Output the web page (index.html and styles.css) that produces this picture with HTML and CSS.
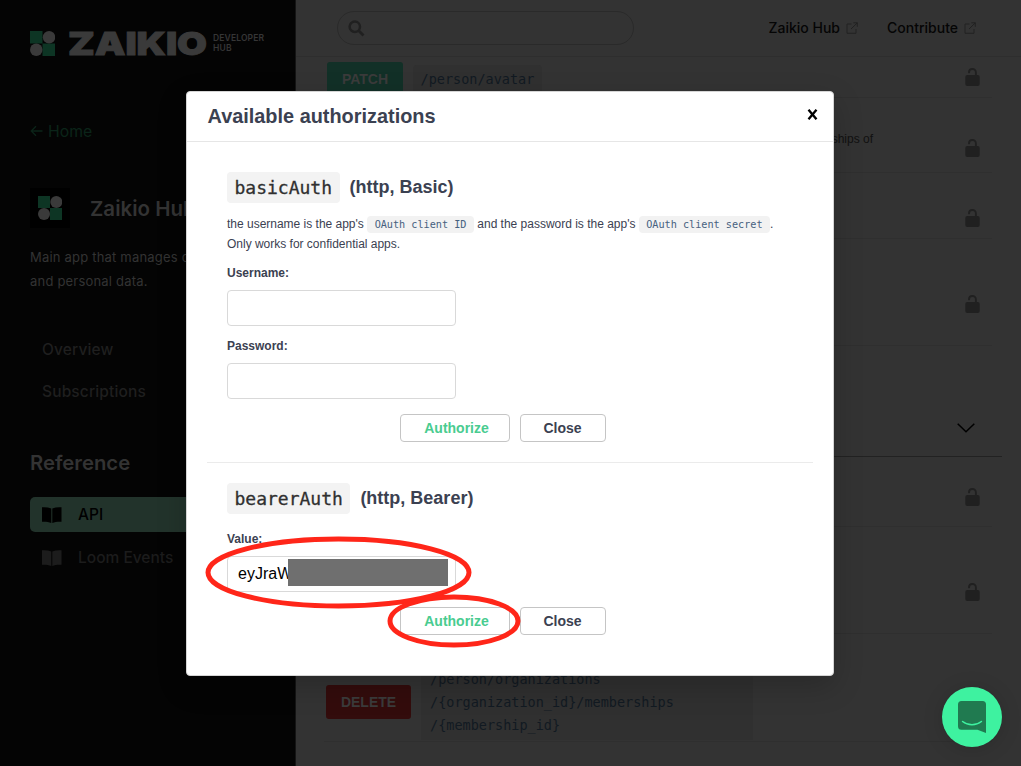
FILE: index.html
```html
<!DOCTYPE html>
<html lang="en">
<head>
<meta charset="utf-8">
<title>Zaikio Developer Hub</title>
<link rel="stylesheet" href="styles.css">
</head>
<body>
<svg class="defs" width="0" height="0">
  <symbol id="lock" viewBox="0 0 15 18"><path d="M4 4.400C4 2.300 5.400 1 7.400 1s3.500 1.400 3.500 3.400V8" fill="none" stroke="currentColor" stroke-width="1.900" stroke-linecap="round"/><rect x=".3" y="7" width="14.400" height="11" rx="2" fill="currentColor"/></symbol>
  <symbol id="external" viewBox="0 0 12 12"><path d="M5.500 2H1v9.300h9V7M7.300.8h4v4M11.200.9 5 7" fill="none" stroke="currentColor" stroke-width="1"/></symbol>
  <symbol id="book" viewBox="0 0 20 16"><path d="M0 .3C3.500 0 6.500.4 9.300 1.400V16C6.500 15 3.500 14.500 0 14.800ZM10.300 1.400C13 .4 16 0 19.500.3V14.800C16 14.500 13 15 10.300 16Z" fill="currentColor"/></symbol>
  <symbol id="mark" viewBox="0 0 24 24"><path class="mark-green" d="M0 0h12v12H0zM12 12h12v12H12z"/><circle class="mark-gray" cx="18.300" cy="6" r="6"/><circle class="mark-gray" cx="6" cy="18" r="6"/></symbol>
</svg>
<div class="app">
  <aside class="sidebar">
    <div class="logo">
      <svg class="logo-mark"><use href="#mark"/></svg>
      <svg class="wordmark" width="142" height="42"><text x="1" y="33" textLength="139" lengthAdjust="spacingAndGlyphs">ZAIKIO</text></svg>
      <span class="logo-sub">DEVELOPER<br>HUB</span>
    </div>
    <a class="home"><svg width="13" height="12" viewBox="0 0 13 12"><path d="M12.500 6H1.500M6 1.300 1.300 6 6 10.700" fill="none" stroke="currentColor" stroke-width="1.300"/></svg>Home</a>
    <div class="product"><span class="product-icon"><svg width="24" height="24"><use href="#mark"/></svg></span><h1>Zaikio Hub</h1></div>
    <p class="about">Main app that manages org<br>and personal data.</p>
    <nav class="links"><a>Overview</a><a>Subscriptions</a></nav>
    <h2>Reference</h2>
    <nav class="refs">
      <a class="ref active"><svg><use href="#book"/></svg>API</a>
      <a class="ref"><svg><use href="#book"/></svg>Loom Events</a>
    </nav>
  </aside>
  <main class="main">
    <header class="topbar">
      <div class="search"><svg width="17" height="17" viewBox="0 0 17 17"><circle cx="6.800" cy="6.800" r="5.200" fill="none" stroke="currentColor" stroke-width="2.500"/><path d="m10.500 10.500 5 5" stroke="currentColor" stroke-width="2.800"/></svg></div>
      <a class="toplink">Zaikio Hub<svg><use href="#external"/></svg></a>
      <a class="toplink">Contribute<svg><use href="#external"/></svg></a>
    </header>
    <section class="list">
      <div class="row r1"><span class="verb patch">PATCH</span><code class="path">/person/avatar</code><svg class="lock"><use href="#lock"/></svg></div>
      <div class="row r2"><span class="summary">memberships of</span><svg class="lock"><use href="#lock"/></svg></div>
      <div class="row r3"><svg class="lock"><use href="#lock"/></svg></div>
      <div class="row r4"><svg class="lock"><use href="#lock"/></svg></div>
      <div class="row group"><svg width="18" height="10" viewBox="0 0 18 10"><path d="m.7.700 8.300 8.100L17.300.7" fill="none" stroke="currentColor" stroke-width="1.500"/></svg></div>
      <div class="row r5"><svg class="lock"><use href="#lock"/></svg></div>
      <div class="row r6"><svg class="lock"><use href="#lock"/></svg></div>
      <div class="row r7"><span class="verb delete">DELETE</span><code class="path long">/person/organizations<br>/{organization_id}/memberships<br>/{membership_id}</code></div>
    </section>
  </main>
  <div class="modal">
    <div class="modal-head"><h3>Available authorizations</h3><svg width="11" height="11" viewBox="0 0 11 11"><path d="m1.500.700 8 9.600M9.500.7l-8 9.600" stroke="#000" stroke-width="2.300"/></svg></div>
    <div class="auth basic">
      <h4><code>basicAuth</code>(http, Basic)</h4>
      <p>the username is the app's <code>OAuth client ID</code> and the password is the app's <code>OAuth client secret</code>.<br>Only works for confidential apps.</p>
      <label>Username:</label><div class="input"></div>
      <label>Password:</label><div class="input"></div>
      <div class="actions"><button class="go">Authorize</button><button>Close</button></div>
    </div>
    <div class="auth bearer">
      <h4><code>bearerAuth</code>(http, Bearer)</h4>
      <label>Value:</label><div class="input"><span>eyJraW</span><i class="redact"></i></div>
      <div class="actions"><button class="go">Authorize</button><button>Close</button></div>
    </div>
  </div>
  <svg class="marks" width="1021" height="766"><g fill="none" stroke="#ff2619" stroke-width="5"><ellipse cx="338.500" cy="572.500" rx="130.500" ry="33.500"/><ellipse cx="454" cy="621" rx="64" ry="24"/></g></svg>
  <div class="chat"><svg width="28" height="32" viewBox="0 0 28 32"><path d="M3.500 0h21A3.500 3.500 0 0 1 28 3.500V32l-8.500-3.300h-16A3.500 3.500 0 0 1 0 25.200V3.500A3.500 3.500 0 0 1 3.500 0Z" fill="#207a50"/><path d="M4.600 20.500c5.500 4.400 13.300 4.400 18.800 0" fill="none" stroke="#3ef2a0" stroke-width="1.600" stroke-linecap="round"/></svg></div>
</div>
</body>
</html>
```
FILE: styles.css
```css
* { box-sizing: border-box; }
body { margin: 0; background: #333; font-family: Inter, sans-serif; }
h1, h2, h3, h4, p { margin: 0; }
.defs { position: absolute; }
.app { position: relative; display: flex; width: 1021px; height: 766px; overflow: hidden; }
.mark-green { fill: #0d3524; }
.mark-gray { fill: #3a3a3a; }

.sidebar { width: 296px; flex: none; background: #040404; padding: 30px 0 0 30px; color: #333; border-right: 1px solid #151515; white-space: nowrap; }
.logo { display: flex; height: 26px; align-items: center; }
.logo-mark { width: 25px; height: 25px; flex: none; }
.wordmark { margin-left: 12px; flex: none; }
.wordmark text { font: 900 32px Inter, sans-serif; fill: #3a3a3a; stroke: #3a3a3a; stroke-width: 1px; }
.logo-sub { margin: 0 0 0 4px; font-size: 8.500px; line-height: 10px; font-weight: 600; letter-spacing: .15px; color: #363636; }
.home { display: flex; align-items: center; gap: 5px; height: 24px; margin-top: 63px; font-size: 15.800px; color: #0b2419; }
.product { display: flex; align-items: center; gap: 20px; margin-top: 45px; height: 40px; }
.product-icon { display: flex; align-items: center; justify-content: center; width: 40px; height: 40px; background: #000; }
.product h1 { font-size: 20.500px; font-weight: 600; }
.about { margin-top: 17px; font-size: 13px; line-height: 24px; letter-spacing: .2px; }
.links { display: flex; flex-direction: column; padding: 36px 0 0 12px; }
.links a { height: 42px; line-height: 42px; font-size: 15.500px; font-weight: 500; color: #1f1f1f; letter-spacing: .15px; }
.sidebar h2 { margin-top: 36px; height: 28px; line-height: 28px; font-size: 20.300px; font-weight: 600; }
.refs { display: flex; flex-direction: column; gap: 8px; margin-top: 20px; }
.ref { display: flex; align-items: center; height: 35px; padding-left: 12px; gap: 16px; font-size: 15.500px; font-weight: 500; color: #1c1c1c; border-radius: 5px; }
.ref svg { width: 20px; height: 16px; }
.ref.active { background: #22332b; color: #000; }

.main { flex: 1; background: #333; }
.topbar { display: flex; align-items: center; height: 57px; border-bottom: 1px solid #2e2e2e; padding: 0 45px 0 41px; }
.search { width: 297px; height: 34px; border: 1px solid #2a2a2a; border-radius: 17px; padding: 8px 10px; color: #202020; margin: 0 auto 0 0; }
.search svg { display: block; }
.toplink { display: flex; align-items: center; gap: 6px; margin: -1px 0 0 29px; font-size: 14px; font-weight: 500; color: #050505; }
.toplink svg { width: 12px; height: 12px; color: #222; }
.list { padding: 0 29px 0 28px; }
.row { display: flex; align-items: flex-start; border-bottom: 1px solid #2f2f2f; position: relative; }
.lock { width: 15px; height: 18px; margin: 0 12px 0 auto; color: #202020; }
.r1 { height: 41px; padding: 5px 0 0 3px; }
.r1 .lock { margin-top: 6px; }
.verb { display: block; border-radius: 3px; text-align: center; color: #3b3b3b; font: 700 14px/34px "Liberation Sans", sans-serif; }
.patch { width: 76px; background: #123027; }
.path { font: 13.500px/23px "DejaVu Sans Mono", monospace; color: #121a22; background: #303030; }
.r1 .path { margin: 3px 0 0 10px; padding: 3px 7.500px; border-radius: 4px; }
.r2 { height: 75px; padding-top: 41px; }
.summary { width: 549px; margin-top: -8px; text-align: right; font: 12px/16px "Liberation Sans", sans-serif; color: #111; }
.r3 { height: 66px; padding-top: 36px; }
.r4 { height: 107px; padding-top: 56px; }
.group { height: 111px; padding-top: 77px; margin-right: -10px; border-color: #222; justify-content: flex-end; color: #000; }
.group svg { margin-right: 27px; }
.r5 { height: 70px; padding-top: 31px; }
.r6 { height: 107px; padding-top: 56px; }
.r7 { height: 108px; }
.delete { width: 85px; margin: 51px 10px 0 2px; background: #330c0c; }
.long { width: 332px; height: 106px; padding: 34px 9px 0; }

.modal { position: absolute; left: 186px; top: 91px; width: 648px; height: 585px; background: #fff; border: 1px solid #d5d5d5; border-radius: 4px; box-shadow: 0 10px 30px rgba(0,0,0,.2); font-family: "Liberation Sans", Arial, sans-serif; color: #3b4151; }
.modal-head { display: flex; align-items: center; justify-content: space-between; height: 50px; padding: 0 15px 2px 20.500px; border-bottom: 1px solid #e6e6e6; }
.modal-head svg { margin-top: -3px; }
.modal-head h3 { font-size: 19.900px; line-height: 24px; }
.auth { margin: 0 20px; padding: 30px 20px 0; white-space: nowrap; }
.basic { height: 321px; border-bottom: 1px solid #ebebeb; }
.bearer { padding-top: 20px; }
.auth h4 { display: flex; align-items: center; height: 31px; gap: 10px; font-size: 18px; }
.auth h4 code { padding: 1px 7.500px 0; border-radius: 4px; background: #f3f3f3; color: #303030; font: 18px/30px "DejaVu Sans Mono", monospace; -webkit-text-stroke: .3px #303030; }
.auth p { margin-top: 11px; font-size: 12px; line-height: 20px; letter-spacing: -.01px; }
.auth p code { font: 10.200px/15px "DejaVu Sans Mono", monospace; color: #47617f; background: #f2f2f2; padding: 3px 7.500px; border-radius: 4px; }
.auth label { display: block; height: 14px; margin-top: 12px; font-size: 12px; line-height: 14px; font-weight: 700; }
.input { position: relative; display: flex; align-items: center; width: 229px; height: 36px; margin-top: 10px; padding-left: 10px; border: 1px solid #d9d9d9; border-radius: 4px; font-size: 16px; color: #000; }
.input + label { margin-top: 13px; }
.redact { position: absolute; left: 60px; top: 2px; width: 160px; height: 27px; background: #6f6f6f; }
.actions { display: flex; gap: 10px; margin: 15px 0 0 173px; }
.actions button { width: 86px; height: 28px; padding: 0 1px 0 0; border: 1px solid #c5c5c5; border-radius: 4px; background: #fff; color: #3b4151; font: 700 14px "Liberation Sans", Arial, sans-serif; }
.actions .go { width: 110px; padding-left: 4px; color: #49cc90; }
.bearer label { margin-top: 18px; }
.marks { position: absolute; left: 0; top: 0; }
.chat { position: absolute; left: 942px; top: 687px; width: 60px; height: 60px; border-radius: 50%; background: #3ef2a0; display: flex; align-items: center; justify-content: center; box-shadow: 0 2px 20px rgba(0,0,0,.15); }
```
